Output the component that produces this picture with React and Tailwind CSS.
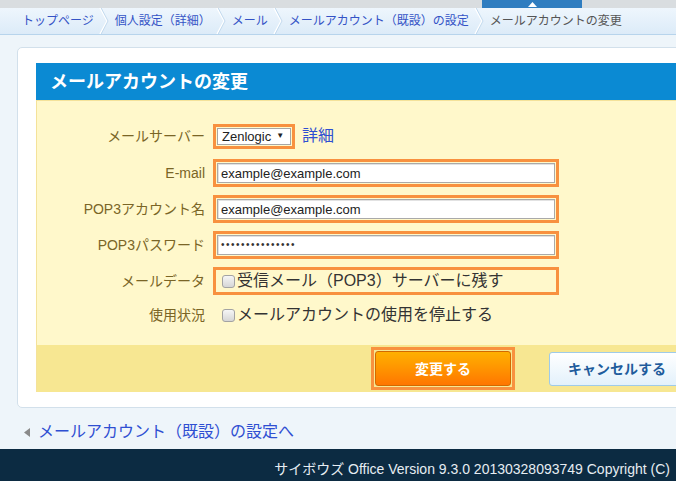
import { Fragment } from 'react'

const crumbs = ['トップページ', '個人設定（詳細）', 'メール', 'メールアカウント（既設）の設定']

function Sep() {
  return (
    <span className="w-[21px] h-full flex justify-center shrink-0">
      <svg width="10" height="26" viewBox="0 0 10 26">
        <path d="M1 0 L8 13 L1 26" fill="none" stroke="#ffffff" strokeWidth="1.5" />
        <path d="M2.2 0 L9 13 L2.2 26" fill="none" stroke="#c3daee" strokeWidth="1" />
      </svg>
    </span>
  )
}

function Checkbox() {
  return <span className="w-[13px] h-[13px] shrink-0 rounded-[3px] border border-[#a3a3a3] bg-linear-to-b from-[#f6f6f6] to-[#d6d6d6]" />
}

function Row({ label, className = 'h-[28px]', children }) {
  return (
    <div className={`flex items-center ${className}`}>
      <div className="w-[168px] text-right text-[14px] leading-none text-[#7a6526]">{label}</div>
      <div className="ml-[8px] flex items-center">{children}</div>
    </div>
  )
}

function Field({ children }) {
  return (
    <div className="h-[28px] w-[346px] border-[3px] border-[#f8913f] p-[1px] bg-[#fff8cb]">
      <div className="h-full bg-white border border-[#a9a9a9] shadow-[inset_1px_1px_0_#e2e2e2] flex items-center pl-[3px] text-[13px] leading-none text-[#222]">
        {children}
      </div>
    </div>
  )
}

export default function App() {
  return (
    <div className="w-[676px] h-[481px] overflow-hidden flex flex-col bg-[#eef5fa] font-['Liberation_Sans','Noto_Sans_CJK_JP',sans-serif]">
      <div className="h-[8px] shrink-0 bg-[#d9dde0] flex">
        <div className="ml-[482px] w-[100px] h-full bg-[#2f7dc0] flex items-center justify-center">
          <svg width="9" height="5" viewBox="0 0 9 5">
            <path d="M0 5 L4.5 0 L9 5Z" fill="#fff" />
          </svg>
        </div>
      </div>

      <div className="h-[27px] shrink-0 bg-linear-to-b from-[#eef6fd] to-[#dcebf8] border-b border-[#b7d4ec] flex items-center pl-[22px] text-[12px] leading-none whitespace-nowrap">
        {crumbs.map((c) => (
          <Fragment key={c}>
            <span className="text-[#3453c6]">{c}</span>
            <Sep />
          </Fragment>
        ))}
        <span className="text-[#555]">メールアカウントの変更</span>
      </div>

      <div className="flex-1 flex flex-col">
        <div className="mt-[12px] ml-[17px] w-[720px] shrink-0 bg-white border border-[#d2e0eb] rounded-[5px] pt-[15px] pl-[18px] pb-[15px]">
          <div className="h-[37px] bg-[#0b8ad3] flex items-center pl-[14px] text-white font-bold text-[18px] leading-none">
            メールアカウントの変更
          </div>

          <div className="h-[245px] bg-[#fff8cb] border-t border-l border-[#f4e29a] pt-[21px] flex flex-col gap-[8px]">
            <Row label="メールサーバー" className="h-[28px] mb-[1px]">
              <div className="h-[25px] w-[82px] border-[3px] border-[#f8913f] p-[1px] bg-[#fff8cb]">
                <div className="h-full bg-white border border-[#a6a6a6] flex items-center pl-[4px] text-[13px] leading-none text-[#222]">
                  Zenlogic<span className="ml-[5px] text-[8px]">▼</span>
                </div>
              </div>
              <span className="ml-[7px] text-[16px] leading-none text-[#2e4fd2]">詳細</span>
            </Row>
            <Row label="E-mail">
              <Field>example@example.com</Field>
            </Row>
            <Row label="POP3アカウント名">
              <Field>example@example.com</Field>
            </Row>
            <Row label="POP3パスワード">
              <Field>
                <span className="text-[10px] tracking-[1.5px] leading-none text-[#333]">•••••••••••••••</span>
              </Field>
            </Row>
            <Row label="メールデータ">
              <div className="h-[28px] w-[346px] border-[3px] border-[#f8913f] flex items-center pl-[6px]">
                <Checkbox />
                <span className="ml-[2px] text-[16px] leading-none text-[#333]">受信メール（POP3）サーバーに残す</span>
              </div>
            </Row>
            <Row label="使用状況" className="h-[24px]">
              <div className="flex items-center pl-[9px]">
                <Checkbox />
                <span className="ml-[2px] text-[16px] leading-none text-[#333]">メールアカウントの使用を停止する</span>
              </div>
            </Row>
          </div>

          <div className="h-[47px] bg-[#f7e792] border-l border-[#f4e29a] flex items-center pl-[334px]">
            <div className="border-[3px] border-[#f8913f] p-[1px] bg-[#f7e792]">
              <div className="w-[136px] h-[35px] rounded-[3px] border border-[#d26a00] bg-linear-to-b from-[#ffb000] to-[#ff7600] flex items-center justify-center text-white font-bold text-[14px] leading-none">
                変更する
              </div>
            </div>
            <div className="ml-[34px] w-[136px] h-[34px] shrink-0 rounded-[3px] border border-[#9fcbe9] bg-linear-to-b from-white to-[#e3f1fb] flex items-center justify-center text-[#1f5c9c] font-bold text-[14px] leading-none">
              キャンセルする
            </div>
          </div>
        </div>

        <div className="mt-[16px] ml-[24px] h-[16px] flex items-center">
          <svg width="6" height="9" viewBox="0 0 6 9">
            <path d="M6 0 L0 4.5 L6 9Z" fill="#8a8a8a" />
          </svg>
          <span className="ml-[8px] text-[16px] leading-none text-[#2e4fd2]">メールアカウント（既設）の設定へ</span>
        </div>
      </div>

      <div className="h-[32px] shrink-0 bg-[#0c2b42] flex items-center justify-end pr-[6px] pt-[8px] text-[14px] leading-none text-[#e6edf2] whitespace-nowrap">
        サイボウズ Office Version 9.3.0 20130328093749 Copyright (C)
      </div>
    </div>
  )
}
